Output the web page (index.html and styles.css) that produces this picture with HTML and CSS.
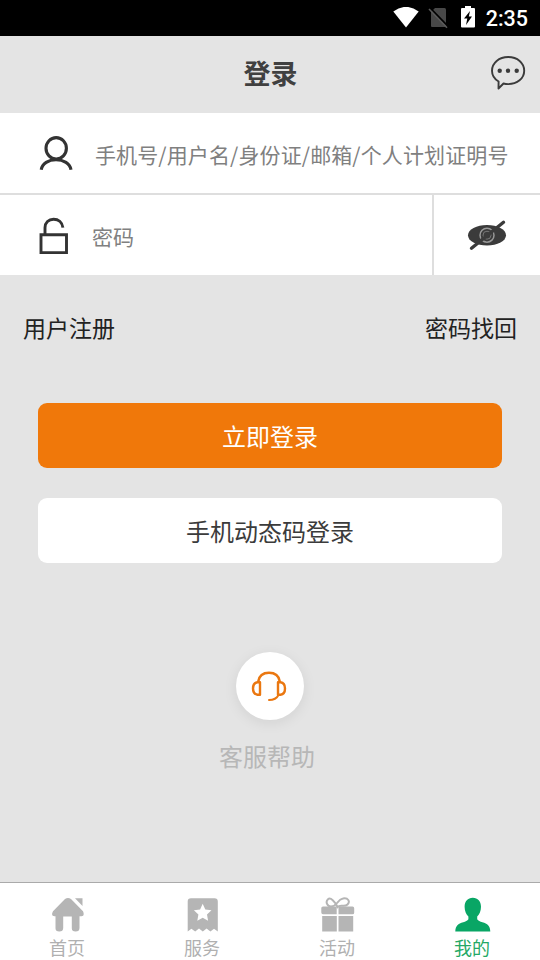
FILE: index.html
```html
<!DOCTYPE html>
<html lang="zh-CN">
<head>
<meta charset="utf-8">
<title>登录</title>
<link rel="stylesheet" href="styles.css">
</head>
<body>
<div class="app">
  <div class="status">
    <svg class="wifi" width="26" height="21" viewBox="0 0 26 21"><path d="M.3 4.500Q13-4.800 25.700 4.500L13 20.500Z" fill="#fff"/></svg>
    <svg class="sim" width="20" height="22" viewBox="0 0 20 22"><path d="M7 1h9.500q1.500 0 1.500 1.500V19.500q0 .5-.5.500H4Q3 20 3 19V5Z" fill="#484848"/><path d="M2 .8 20 19.300" stroke="#000" stroke-width="1.800"/><path d="M1 2 19 20.800" stroke="#5a5a5a" stroke-width="1.600"/></svg>
    <svg class="battery" width="14" height="22" viewBox="0 0 14 22"><path d="M4 0h6v2h3q1 0 1 1v17.500q0 1-1 1H1q-1 0-1-1V3q0-1 1-1h3Z" fill="#fff"/><path d="M9 5 3 12.500h3.300L5 19 11 10.500H7.800Z" fill="#000"/></svg>
    <span class="time">2:35</span>
  </div>

  <header class="header">
    <h1 class="title">登录</h1>
    <svg class="chat" width="36" height="36" viewBox="0 0 36 36"><path d="M8.600 26.500C4.500 24 2 20.200 2 15.700 2 8 9 2 18.200 2s16 6 16 13.700-7 13.400-16 13.400q-2.500 0-4.700-.6L8.500 33.500Z" fill="none" stroke="#3b3b3b" stroke-width="1.900" stroke-linejoin="round"/><g fill="#3b3b3b"><circle cx="9.700" cy="15.700" r="2.200"/><circle cx="18" cy="15.700" r="2.200"/><circle cx="26.700" cy="15.700" r="2.200"/></g></svg>
  </header>

  <main class="main">
    <div class="field account">
      <svg width="34" height="36" viewBox="0 0 34 36" fill="none" stroke="#333" stroke-width="3.100"><ellipse cx="17.200" cy="13.300" rx="10.200" ry="10.700"/><path d="M2.200 34.800C3.200 28.500 9.500 24.700 17 24.700s14 3.800 15 10.100"/></svg>
      <span class="placeholder">手机号/用户名/身份证/邮箱/个人计划证明号</span>
    </div>
    <div class="field password">
      <svg width="31" height="38" viewBox="0 0 31 38" fill="none" stroke="#333" stroke-width="2.900"><path d="M3 18.700h25.500v18H3ZM7 18.200V11.700C7 6.600 10.700 3.200 15.600 3.200c4.600 0 8.700 2.900 9.300 8.500"/></svg>
      <span class="placeholder">密码</span>
      <div class="toggle">
        <svg width="40" height="32" viewBox="0 0 40 32"><ellipse cx="20" cy="16.300" rx="19" ry="10.200" fill="#3b3b3b"/><circle cx="20" cy="16.200" r="7" fill="none" stroke="#999" stroke-width="1.500"/><circle cx="20" cy="16.200" r="4" fill="none" stroke="#777" stroke-width="1"/><path d="M4.500 29.200 36.500 3.200" stroke="#3b3b3b" stroke-width="3.400" stroke-linecap="round"/></svg>
      </div>
    </div>

    <div class="links"><span>用户注册</span><span>密码找回</span></div>
    <div class="button primary">立即登录</div>
    <div class="button secondary">手机动态码登录</div>

    <div class="support">
      <div class="circle">
        <svg width="36" height="32" viewBox="0 0 36 32" fill="none" stroke="#ea7710" stroke-width="2.400" stroke-linecap="round" stroke-linejoin="round"><path d="M7.200 11.500C8.200 5.500 12.300 2.800 18 2.800s9.800 2.700 10.800 8.700"/><path d="M9 12.200v12.500H6.500Q2 24.200 2 18.500T6.500 12.200ZM27 12.200v12.500h2.500Q34 24.200 34 18.500T29.500 12.200Z"/><path d="M27.500 25Q25 30 18 30" stroke-width="2"/></svg>
      </div>
      <span class="support-label">客服帮助</span>
    </div>
  </main>

  <nav class="tabs">
    <div class="tab">
      <svg width="36" height="36" viewBox="0 0 36 36" fill="#b5b5b5"><path d="M15 2q3-2.200 6 0L33 14.300q2 4.700-1.500 5H29.500V31q0 3.500-3.900 3.500T21.800 31V19.500H13.200V31q0 3.500-3.900 3.500T5.500 31V19.300H4.500Q.5 19 3 14.300ZM25 1.200h7.500V9Z"/></svg>
      <span>首页</span>
    </div>
    <div class="tab">
      <svg width="36" height="36" viewBox="0 0 36 36"><path d="M2.700 4.500q0-3.300 3.300-3.300h23.500q3.300 0 3.300 3.300V34.500l-3.800-2.800-3.600 2.800-3.800-3-3.800 3-3.800-3-3.800 3-3.800-2.800-3.700 2.800Z" fill="#b5b5b5"/><path d="m17.700 6.800 2.600 5.700 6.200.8-4.500 4.300 1.100 6.200-5.400-3-5.400 3 1.100-6.200-4.500-4.300 6.200-.8Z" fill="#fff"/></svg>
      <span>服务</span>
    </div>
    <div class="tab">
      <svg width="36" height="36" viewBox="0 0 36 36" fill="#b5b5b5"><path d="M3 9.500h13.700v7.800H3q-1.700 0-1.700-1.700v-4.500Q1.300 9.500 3 9.500ZM18.500 9.500h14q1.700 0 1.700 1.700v4.500q0 1.600-1.700 1.600h-14ZM2.200 19h14.600v15.500H2.200ZM18.500 19h14.700v15.500H18.500Z"/><path d="M17.500 10C15 4.500 10.500 0 8 2.200 5 5 7.500 9.500 11 9.500q3.500-.2 6.500-4 2.500-3.500 5.500-4C28 .5 30.500 4.500 27.500 7.500 24.500 10.500 20 7 17.500 10Z" fill="none" stroke="#b5b5b5" stroke-width="2"/></svg>
      <span>活动</span>
    </div>
    <div class="tab active">
      <svg width="36" height="36" viewBox="0 0 36 36"><path d="M17.800.8c5 0 8.200 3.700 8.200 9 0 4.400-1.600 7.700-3.800 9.700v2.700c1 1.600 2.800 2.200 5.200 3 5.100 1.600 7.700 3.400 7.900 9.300H.3c.2-5.900 2.800-7.700 7.900-9.300 2.400-.8 4.200-1.400 5.200-3v-2.700c-2.200-2-3.800-5.300-3.800-9.700 0-5.300 3.200-9 8.200-9Z" fill="#09a665"/></svg>
      <span>我的</span>
    </div>
  </nav>
</div>
</body>
</html>
```
FILE: styles.css
```css
* { box-sizing: border-box; }
body { margin: 0; font-family: "Noto Sans CJK SC", sans-serif; }
svg { display: block; flex: none; }
.app { display: flex; flex-direction: column; width: 540px; height: 960px; background: #e4e4e4; overflow: hidden; }
.status { display: flex; align-items: center; justify-content: flex-end; height: 36px; padding-right: 12px; background: #000; }
.wifi { margin-bottom: 2px; }
.sim { margin-left: 9px; }
.battery { margin: 0 11px 2px 13px; }
.time { font: 500 21.5px/36px Roboto, sans-serif; color: #fff; padding-top: 2px; }
.header { display: grid; grid-template-columns: 50px 1fr 50px; align-items: center; height: 77px; padding-bottom: 3px; }
.title { grid-column: 2; margin: 0; padding-left: 1px; text-align: center; font-size: 27px; line-height: 40px; font-weight: 700; color: #404040; }
.main { flex: 1; display: flex; flex-direction: column; }
.field { display: flex; align-items: center; background: #fff; color: #808080; font-size: 21px; }
.account { height: 82px; padding-left: 39px; gap: 22px; border-bottom: 2px solid #dedede; }
.password { height: 80px; padding-left: 38px; gap: 23px; }
.placeholder { white-space: nowrap; line-height: 30px; padding-top: 1px; letter-spacing: .12px; }
.toggle { display: flex; align-items: center; justify-content: center; width: 108px; height: 80px; margin-left: auto; border-left: 2px solid #dedede; }
.links { display: flex; justify-content: space-between; padding: 0 23px; margin-top: 35px; font-size: 23px; line-height: 34px; color: #222; }
.button { height: 65px; margin: 0 38px; border-radius: 9px; font-size: 24px; line-height: 65px; text-align: center; }
.primary { margin-top: 59px; background: #f0780a; color: #fff; }
.secondary { margin-top: 30px; background: #fff; color: #3b3b3b; }
.support { display: flex; flex-direction: column; align-items: center; margin-top: 89px; }
.circle { display: flex; align-items: center; justify-content: center; width: 68px; height: 68px; margin-right: 1px; border-radius: 50%; background: #fff; box-shadow: 0 3px 14px rgba(0, 0, 0, .08); }
.circle svg { margin-right: 1px; }
.support-label { margin: 18px 6px 0 0; font-size: 24px; line-height: 36px; color: #b7b7b7; }
.tabs { display: grid; grid-template-columns: repeat(4, 1fr); height: 78px; background: #fff; border-top: 1px solid #aaa; }
.tab { display: flex; flex-direction: column; align-items: center; padding: 14px 1px 0 0; font-size: 18px; line-height: 26px; color: #b0b0b0; }
.tab svg { margin-left: 1px; }
.tab span { margin-top: 1px; }
.active { color: #24a865; }
```
